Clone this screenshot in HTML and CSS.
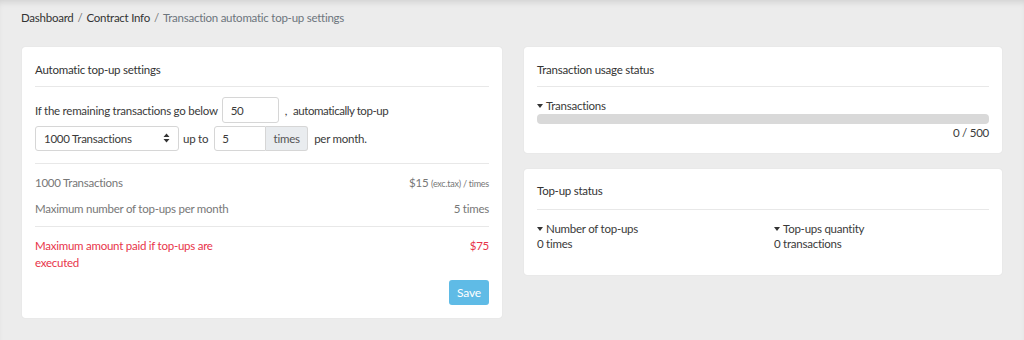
FILE: index.html
```html
<!DOCTYPE html>
<html>
<head>
<meta charset="utf-8">
<link rel="stylesheet" href="styles.css">
</head>
<body>
<div class="page">
  <nav class="crumbs">
    <span class="crumb-link">Dashboard</span><span class="sep">/</span><span class="crumb-link">Contract Info</span><span class="sep">/</span><span class="crumb-current">Transaction automatic top-up settings</span>
  </nav>
  <div class="grid">
    <section class="card card-left">
      <h2 class="card-title">Automatic top-up settings</h2>
      <div class="form">
        <div class="line">
          <span>If the remaining transactions go below</span>
          <span class="input w-below">50</span>
          <span class="comma">,</span>
          <span class="tight">automatically top-up</span>
        </div>
        <div class="line">
          <span class="select">1000 Transactions<svg class="updown" width="7" height="10" viewBox="0 0 7 10"><path d="M3.5 0.5 L6.5 4 L0.5 4 Z M3.5 9.5 L6.5 6 L0.5 6 Z" fill="#333"/></svg></span>
          <span>up to</span>
          <span class="group"><span class="input w-times">5</span><span class="addon">times</span></span>
          <span>per month.</span>
        </div>
      </div>
      <div class="summary">
        <div class="srow"><span>1000 Transactions</span><span>$15 <small>(exc.tax) / times</small></span></div>
        <div class="srow"><span>Maximum number of top-ups per month</span><span>5 times</span></div>
      </div>
      <div class="total">
        <span class="total-label">Maximum amount paid if top-ups are executed</span><span>$75</span>
      </div>
      <div class="actions"><button class="btn">Save</button></div>
    </section>
    <div class="right">
      <section class="card">
        <h2 class="card-title">Transaction usage status</h2>
        <div class="stat-label"><span class="caret"></span>Transactions</div>
        <div class="bar"></div>
        <div class="bar-count">0 / 500</div>
      </section>
      <section class="card card-topup">
        <h2 class="card-title">Top-up status</h2>
        <div class="cols">
          <div>
            <div class="stat-label"><span class="caret"></span>Number of top-ups</div>
            <div>0 times</div>
          </div>
          <div>
            <div class="stat-label"><span class="caret"></span>Top-ups quantity</div>
            <div>0 transactions</div>
          </div>
        </div>
      </section>
    </div>
  </div>
</div>
</body>
</html>
```

FILE: styles.css
```css
* { box-sizing: border-box; }
html, body { margin: 0; padding: 0; }
body {
  background: #ececec;
  font-family: "Lato", "Noto Sans", sans-serif;
  font-size: 11.5px;
  letter-spacing: -0.25px;
  color: #3a3a3a;
  height: 340px;
  box-shadow: inset 0 5px 6px -3px rgba(0,0,0,0.12);
}
.page { padding: 10px 22px 0 21px; }
.crumbs { font-size: 11.5px; line-height: 14px; color: #333; height: 37px; padding-top: 1px; }
.crumbs .sep { color: #777; margin: 0 4px; }
.crumb-current { color: #6c757d; }
.grid { display: flex; gap: 22px; align-items: flex-start; margin-left: 1px; }
.card {
  background: #fff;
  border-radius: 3px;
  box-shadow: 0 0 1px rgba(0,0,0,0.15);
  padding: 0 13px 13px;
}
.card-left { width: 480px; height: 271px; }
.right { flex: 0 0 478px; display: flex; flex-direction: column; gap: 16px; }
.card-title {
  font-weight: normal;
  font-size: 11.5px;
  margin: 0;
  padding: 16px 0 9px;
  border-bottom: 1px solid #e8e8e8;
  line-height: 14px;
  color: #333;
}
.form { padding: 10px 0 12px; border-bottom: 1px solid #e8e8e8; }
.line { display: flex; align-items: center; height: 26px; }
.line + .line { margin-top: 2px; }
.line > span { margin-right: 6px; }
.line > span:first-child { margin-right: 4px; }
.tight { letter-spacing: -0.45px; }
.input {
  display: inline-flex;
  align-items: center;
  height: 26px;
  border: 1px solid #d6d6d6;
  border-radius: 3px;
  padding: 0 8px;
  background: #fff;
}
.w-below { width: 57px; }
.comma { margin-left: 0; margin-right: 6px !important; }
.select {
  display: inline-flex;
  align-items: center;
  justify-content: space-between;
  width: 144px;
  height: 25px;
  border: 1px solid #d6d6d6;
  border-radius: 3px;
  padding: 0 8px 0 8px;
}
.updown { display: block; }
.group { display: inline-flex; }
.group .input { width: 52px; border-radius: 3px 0 0 3px; height: 25px; padding-left: 7px; }
.addon {
  display: inline-flex; align-items: center; justify-content: center;
  width: 42px; height: 25px;
  background: #e9ecef;
  border: 1px solid #d6d6d6; border-left: 0;
  border-radius: 0 3px 3px 0;
  color: #555;
}
.summary { padding: 5px 0 5px; border-bottom: 1px solid #e8e8e8; color: #777; }
.srow { display: flex; justify-content: space-between; height: 26px; align-items: center; }
.srow small { font-size: 9px; }
.total { display: flex; justify-content: space-between; color: #e8344a; padding-top: 10px; line-height: 17px; }
.total-label { width: 185px; }
.actions { display: flex; justify-content: flex-end; margin-top: 9px; }
.btn {
  font-family: inherit;
  font-size: 12px;
  letter-spacing: -0.2px;
  color: #fff;
  background: #5fbbe6;
  border: 0;
  border-radius: 3px;
  width: 40px; height: 25px;
  padding: 0;
}
.stat-label { display: flex; align-items: center; margin-top: 12px; line-height: 14px; }
.caret {
  width: 0; height: 0;
  border-left: 3.5px solid transparent;
  border-right: 3.5px solid transparent;
  border-top: 4px solid #333;
  margin-right: 3px;
}
.bar { height: 10px; background: #d9d9d9; border-radius: 4px; margin-top: 1px; }
.bar-count { text-align: right; margin-top: 2px; line-height: 14px; }
.card-topup { height: 106px; }
.card-topup .card-title { padding-top: 15px; padding-bottom: 11px; }
.cols { display: grid; grid-template-columns: 237px 1fr; line-height: 16px; }
.cols .stat-label { margin-top: 12px; }
```
